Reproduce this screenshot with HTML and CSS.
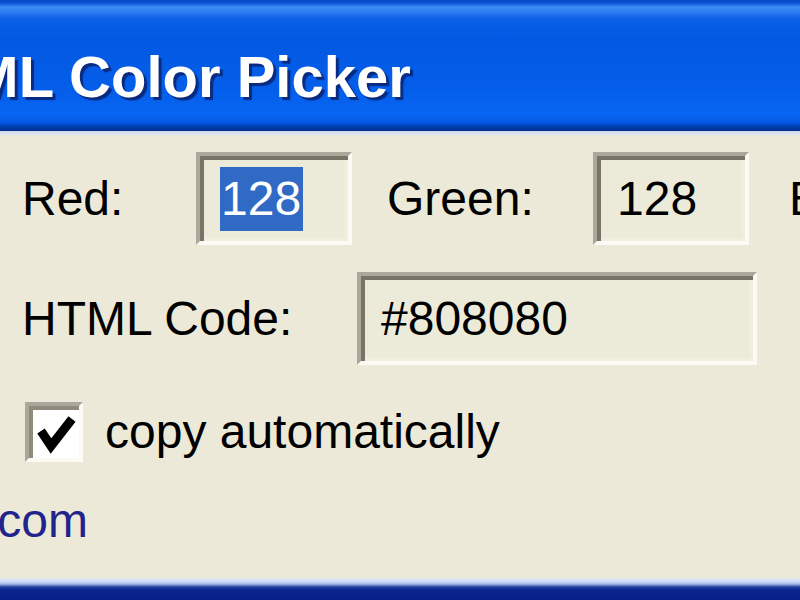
FILE: index.html
```html
<!DOCTYPE html>
<html lang="en">
<head>
  <meta charset="UTF-8">
  <meta name="viewport" content="width=device-width, initial-scale=1.0">
  <title>HTML Color Picker</title>
  <link rel="stylesheet" href="styles.css">
</head>
<body>
  <div class="window">
    <header class="titlebar">
      <h1 class="title">HTML Color Picker</h1>
    </header>
    <div class="title-edge"></div>
    <main class="content">
      <div class="row">
        <span class="label label-red">Red:</span>
        <div class="field field-small"><span class="selected">128</span></div>
        <span class="label label-green">Green:</span>
        <div class="field field-small">128</div>
        <span class="label label-blue">Blue:</span>
        <div class="field field-small">128</div>
      </div>
      <div class="row row-code">
        <span class="label label-code">HTML Code:</span>
        <div class="field field-wide">#808080</div>
      </div>
      <label class="row row-check">
        <span class="checkbox">
          <svg width="48" height="50" viewBox="0 0 48 50">
            <polyline points="11,24 21,39 42,12" fill="none" stroke="#000" stroke-width="9" stroke-linejoin="miter"/>
          </svg>
        </span>
        <span class="check-text">copy automatically</span>
      </label>
      <div class="site"><a href="#">www.htmlcolorpicker.com</a></div>
    </main>
    <div class="frame-bottom"></div>
  </div>
</body>
</html>
```

FILE: styles.css
```css
body {
  margin: 0;
  background-color: #ece9d8;
  font-family: 'Liberation Sans', Arial, sans-serif;
  font-size: 48px;
  line-height: 1;
  color: #000;
  overflow: hidden;
}
.window {
  display: flex;
  flex-direction: column;
  height: 600px;
}
.titlebar {
  height: 131px;
  flex-shrink: 0;
  overflow: hidden;
  background: linear-gradient(to bottom,
    #0848c0 0px, #0a52d6 3px, #3b8df4 7px, #2f7cf0 12px, #0a5fe6 19px,
    #0358e3 40px, #045ee9 90px, #0866f4 114px, #0456e0 123px,
    #003ca8 127px, #002f8e 131px);
}
.title {
  margin: 0 0 0 -107px;
  padding-top: 48px;
  font-size: 58px;
  font-weight: bold;
  line-height: 1;
  color: #fff;
  white-space: nowrap;
  text-shadow: 3px 3px 1px #0a2a80;
}
.title-edge {
  height: 6px;
  flex-shrink: 0;
  background: linear-gradient(to bottom, #c9daf4, #e2e6ea 60%, #ece9d8);
}
.content {
  flex: 1;
  padding: 15px 0 0 22px;
}
.row {
  display: flex;
  align-items: center;
  white-space: nowrap;
}
.label {
  flex-shrink: 0;
}
.label-red {
  width: 174px;
}
.label-green {
  width: 206px;
  margin-left: 35px;
}
.label-blue {
  margin-left: 40px;
  width: 200px;
}
.field {
  box-sizing: border-box;
  flex-shrink: 0;
  display: flex;
  align-items: center;
  height: 93px;
  padding-left: 20px;
  background-color: #ecead9;
  border-style: solid;
  border-width: 4px;
  border-color: #aca899 #fbfaf4 #fbfaf4 #aca899;
  box-shadow: inset 4px 4px 0 #777468, inset -3px -3px 0 #f1efe2;
}
.field-small {
  width: 156px;
}
.field-wide {
  width: 400px;
}
.selected {
  background-color: #316ac5;
  color: #fff;
  padding: 8px 2px 8px 1px;
}
.row-code {
  margin-top: 27px;
}
.label-code {
  width: 335px;
}
.row-check {
  margin-top: 37px;
  margin-left: 3px;
}
.checkbox {
  box-sizing: border-box;
  width: 58px;
  height: 60px;
  flex-shrink: 0;
  background-color: #fff;
  border-style: solid;
  border-width: 4px;
  border-color: #aca899 #fbfaf4 #fbfaf4 #aca899;
  box-shadow: inset 4px 4px 0 #8e8b7e;
  display: flex;
  align-items: center;
  justify-content: center;
}
.check-text {
  margin-left: 22px;
}
.site {
  width: 88px;
  margin: 35px 0 0 -22px;
  display: flex;
  justify-content: flex-end;
  white-space: nowrap;
}
.site a {
  color: #23238c;
  text-decoration: none;
}
.frame-bottom {
  height: 22px;
  flex-shrink: 0;
  background: linear-gradient(to bottom,
    #e4e8ee 0px, #d2e0f8 3px, #a8bce8 6px, #2040a0 9px, #0a2490 12px, #081e88 22px);
}
```
